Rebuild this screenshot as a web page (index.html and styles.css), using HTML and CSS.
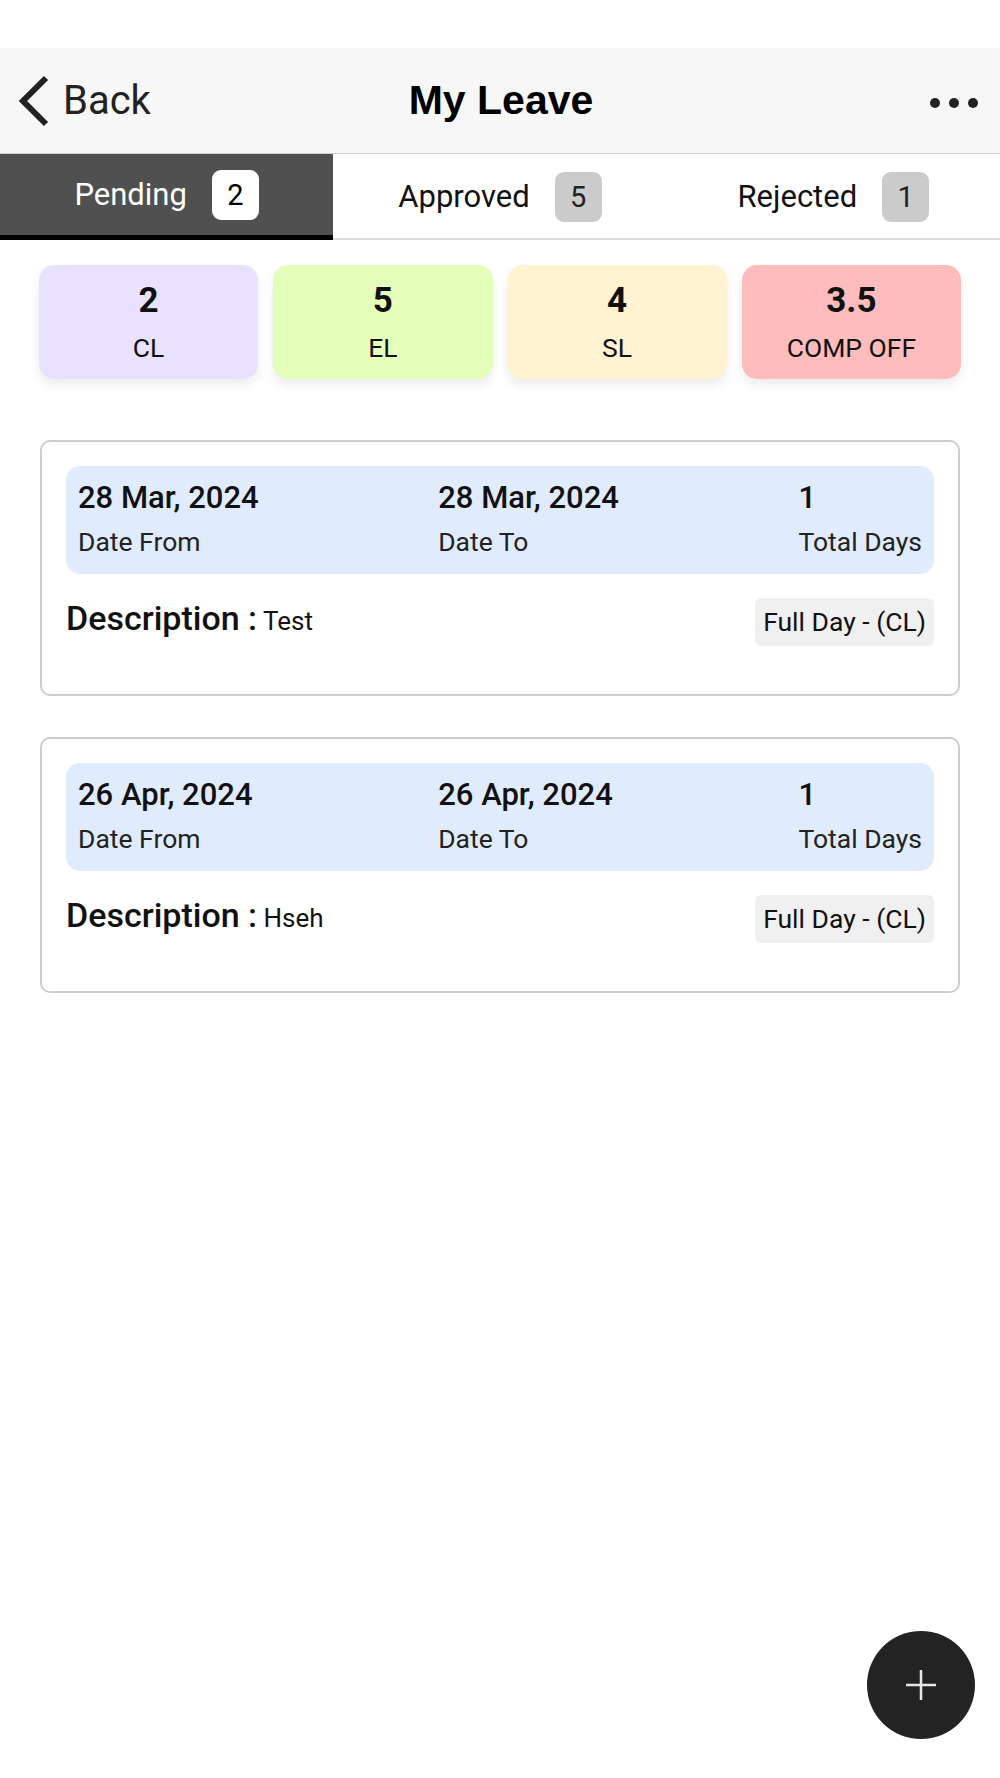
FILE: index.html
```html
<!DOCTYPE html>
<html lang="en">
<head>
    <meta charset="UTF-8">
    <meta name="viewport" content="width=device-width, initial-scale=1.0">
    <title>My Leave</title>
    <link rel="stylesheet" href="styles.css">
</head>
<body>

    <div class="status-bar"></div>

    <!-- Top bar -->
    <div class="header">
        <div class="back">
            <svg class="back-icon" width="32" height="52" viewBox="0 0 32 52">
                <polyline points="28,3 5,26 28,49" fill="none" stroke="#222" stroke-width="6" stroke-linejoin="miter"/>
            </svg>
            <span>Back</span>
        </div>
        <h1 class="title">My Leave</h1>
        <div class="more">
            <span class="dot"></span>
            <span class="dot"></span>
            <span class="dot"></span>
        </div>
    </div>

    <!-- Status tabs -->
    <div class="tabs">
        <div class="tab active">Pending <span class="count">2</span></div>
        <div class="tab">Approved <span class="count">5</span></div>
        <div class="tab">Rejected <span class="count">1</span></div>
    </div>

    <!-- Leave balance -->
    <div class="summary">
        <div class="balance cl">
            <div class="balance-value">2</div>
            <div class="balance-label">CL</div>
        </div>
        <div class="balance el">
            <div class="balance-value">5</div>
            <div class="balance-label">EL</div>
        </div>
        <div class="balance sl">
            <div class="balance-value">4</div>
            <div class="balance-label">SL</div>
        </div>
        <div class="balance comp">
            <div class="balance-value">3.5</div>
            <div class="balance-label">COMP OFF</div>
        </div>
    </div>

    <!-- Leave requests -->
    <div class="leave-list">
        <div class="leave-card">
            <div class="dates">
                <div class="date-col">
                    <div class="date-value">28 Mar, 2024</div>
                    <div class="date-label">Date From</div>
                </div>
                <div class="date-col">
                    <div class="date-value">28 Mar, 2024</div>
                    <div class="date-label">Date To</div>
                </div>
                <div class="date-col">
                    <div class="date-value">1</div>
                    <div class="date-label">Total Days</div>
                </div>
            </div>
            <div class="desc-row">
                <div class="desc"><b>Description :</b> <span>Test</span></div>
                <div class="leave-type">Full Day - (CL)</div>
            </div>
        </div>

        <div class="leave-card">
            <div class="dates">
                <div class="date-col">
                    <div class="date-value">26 Apr, 2024</div>
                    <div class="date-label">Date From</div>
                </div>
                <div class="date-col">
                    <div class="date-value">26 Apr, 2024</div>
                    <div class="date-label">Date To</div>
                </div>
                <div class="date-col">
                    <div class="date-value">1</div>
                    <div class="date-label">Total Days</div>
                </div>
            </div>
            <div class="desc-row">
                <div class="desc"><b>Description :</b> <span>Hseh</span></div>
                <div class="leave-type">Full Day - (CL)</div>
            </div>
        </div>
    </div>

    <!-- Add button -->
    <div class="fab">
        <svg width="32" height="32" viewBox="0 0 32 32">
            <path d="M16 1 V31 M1 16 H31" stroke="#e8e8e8" stroke-width="2.5"/>
        </svg>
    </div>

</body>
</html>
```

FILE: styles.css
```css
body {
    font-family: 'Roboto', 'Liberation Sans', sans-serif;
    background-color: #fff;
    margin: 0;
    color: #111;
    width: 1000px;
    height: 1778px;
    position: relative;
    overflow: hidden;
}

.status-bar {
    height: 48px;
}

.header {
    height: 105px;
    background-color: #f7f7f7;
    border-bottom: 1px solid #cfcfcf;
    display: grid;
    grid-template-columns: 1fr auto 1fr;
    align-items: center;
    padding: 0 20px;
}

.back {
    display: flex;
    align-items: center;
    gap: 13px;
    margin-left: -2px;
    font-size: 40px;
    color: #222;
}

.back-icon {
    display: block;
}

.title {
    margin: 0 0 0 2px;
    font-family: 'Liberation Sans', Arial, sans-serif;
    font-weight: bold;
    font-size: 41px;
    color: #000;
}

.more {
    display: flex;
    justify-content: flex-end;
    gap: 9px;
    margin-right: 2px;
    padding-top: 4px;
}

.dot {
    width: 10px;
    height: 10px;
    border-radius: 50%;
    background-color: #222;
}

.tabs {
    display: grid;
    grid-template-columns: repeat(3, 1fr);
    height: 86px;
}

.tab {
    display: flex;
    align-items: center;
    justify-content: center;
    gap: 25px;
    font-size: 31px;
    color: #111;
    border-bottom: 2px solid #ddd;
    padding-top: 1px;
}

.tab.active {
    background-color: #505050;
    color: #fff;
    border-bottom: 5px solid #000;
    padding-top: 0;
}

.count {
    width: 47px;
    height: 50px;
    border-radius: 9px;
    background-color: #cbcbcb;
    color: #222;
    display: flex;
    align-items: center;
    justify-content: center;
    font-size: 29px;
}

.tab.active .count {
    background-color: #fff;
    color: #000;
}

.summary {
    display: grid;
    grid-template-columns: repeat(4, 1fr);
    gap: 15px;
    padding: 25px 39px 0;
}

.balance {
    height: 114px;
    border-radius: 15px;
    display: flex;
    flex-direction: column;
    align-items: center;
    justify-content: center;
    gap: 12px;
    box-shadow: 0 6px 12px rgba(0, 0, 0, 0.08);
}

.balance-value {
    font-size: 35px;
    font-weight: bold;
    line-height: 40px;
}

.balance-label {
    font-size: 26.5px;
    line-height: 30px;
}

.cl { background-color: #e8e2ff; }
.el { background-color: #e4fdbb; }
.sl { background-color: #fff3d1; }
.comp { background-color: #ffbcbc; }

.leave-list {
    display: flex;
    flex-direction: column;
    gap: 41px;
    padding: 61px 40px 0;
}

.leave-card {
    border: 2px solid #cdcdcd;
    border-radius: 10px;
    padding: 24px 24px 48px;
}

.dates {
    background-color: #e0ebfd;
    border-radius: 14px;
    padding: 14px 12px 17px;
    display: flex;
    justify-content: space-between;
}

.date-col {
    display: flex;
    flex-direction: column;
    gap: 11px;
}

.date-value {
    font-size: 31px;
    font-weight: 500;
    line-height: 36px;
}

.date-label {
    font-size: 26.5px;
    line-height: 30px;
    color: #222;
}

.desc-row {
    display: flex;
    justify-content: space-between;
    align-items: flex-start;
    margin-top: 24px;
}

.desc {
    font-size: 26px;
    line-height: 40px;
}

.desc b {
    font-size: 34px;
    font-weight: 500;
}

.leave-type {
    height: 48px;
    line-height: 48px;
    padding: 0 8px;
    background-color: #f0f0f0;
    border-radius: 6px;
    font-size: 26.5px;
}

/* floating add button */
.fab {
    position: absolute;
    right: 25px;
    bottom: 39px;
    width: 108px;
    height: 108px;
    border-radius: 50%;
    background-color: #232323;
    display: flex;
    align-items: center;
    justify-content: center;
}
```
